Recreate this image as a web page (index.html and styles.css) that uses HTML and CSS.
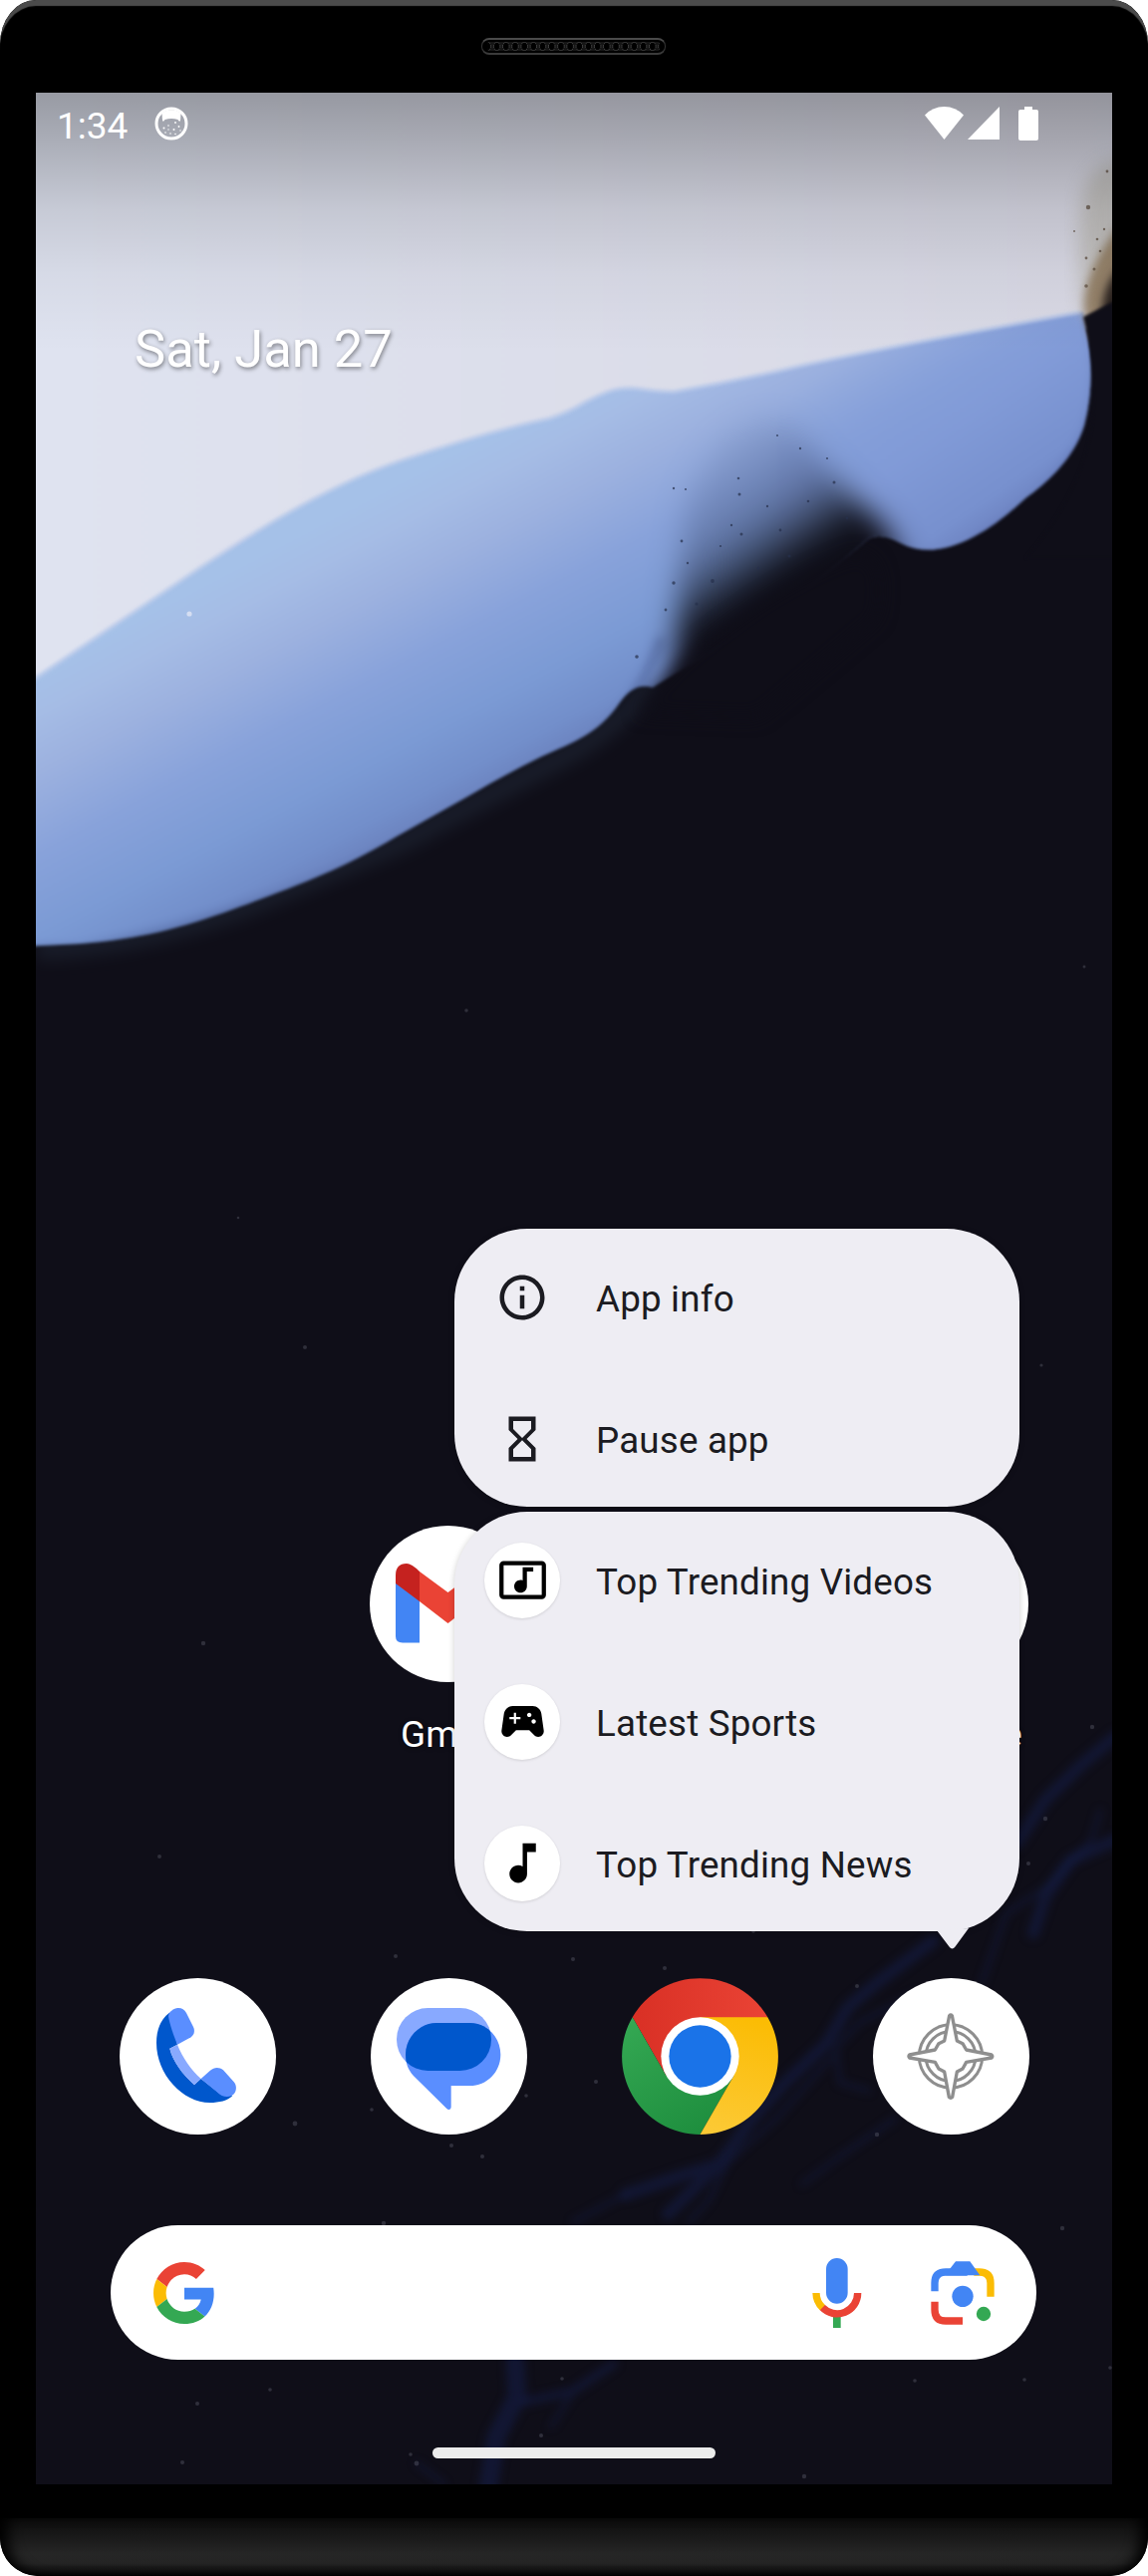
FILE: index.html
```html
<!DOCTYPE html>
<html lang="en">
<head>
<meta charset="utf-8">
<title>Home screen</title>
<link rel="stylesheet" href="styles.css">
</head>
<body>
<div class="phone">
  <div class="bezel-top">
    <div class="speaker"></div>
  </div>

  <main class="screen">
    <svg class="wallpaper" viewBox="36 93 1080 2400" aria-hidden="true">
      <defs>
        <linearGradient id="petal" gradientUnits="userSpaceOnUse" x1="276" y1="546" x2="430" y2="840">
          <stop offset="0" stop-color="#a5c1e8"/>
          <stop offset=".12" stop-color="#a5bce5"/>
          <stop offset=".28" stop-color="#9cb1df"/>
          <stop offset=".5" stop-color="#88a2da"/>
          <stop offset=".72" stop-color="#7b9ad4"/>
          <stop offset=".88" stop-color="#728eca"/>
          <stop offset="1" stop-color="#687db9"/>
        </linearGradient>
        <linearGradient id="tip" gradientUnits="userSpaceOnUse" x1="880" y1="340" x2="1010" y2="530">
          <stop offset="0" stop-color="#86a0da" stop-opacity="0"/>
          <stop offset=".5" stop-color="#819ad7" stop-opacity=".9"/>
          <stop offset=".85" stop-color="#7790ce"/>
          <stop offset="1" stop-color="#6b80be"/>
        </linearGradient>
        <linearGradient id="dust" gradientUnits="userSpaceOnUse" x1="776" y1="612" x2="680" y2="470">
          <stop offset="0" stop-color="#0f0e18"/>
          <stop offset=".16" stop-color="#10111b"/>
          <stop offset=".32" stop-color="#2a3449" stop-opacity=".8"/>
          <stop offset=".5" stop-color="#43527a" stop-opacity=".55"/>
          <stop offset=".75" stop-color="#5a6c98" stop-opacity=".38"/>
          <stop offset="1" stop-color="#6d80ad" stop-opacity=".2"/>
        </linearGradient>
        <linearGradient id="paper" x1="0" y1="0" x2="1" y2="0">
          <stop offset="0" stop-color="#dfe3f0"/>
          <stop offset="1" stop-color="#d8d8e4"/>
        </linearGradient>
        <linearGradient id="scrim" x1="0" y1="0" x2="0" y2="1">
          <stop offset="0" stop-color="#000" stop-opacity=".32"/>
          <stop offset=".2" stop-color="#000" stop-opacity=".23"/>
          <stop offset=".45" stop-color="#000" stop-opacity=".11"/>
          <stop offset=".7" stop-color="#000" stop-opacity=".04"/>
          <stop offset="1" stop-color="#000" stop-opacity="0"/>
        </linearGradient>
        <filter id="b1" color-interpolation-filters="sRGB"><feGaussianBlur stdDeviation="1.5"/></filter>
        <filter id="b4" color-interpolation-filters="sRGB" x="-20%" y="-20%" width="140%" height="140%"><feGaussianBlur stdDeviation="4"/></filter>
        <filter id="b9" color-interpolation-filters="sRGB" x="-30%" y="-30%" width="160%" height="160%"><feGaussianBlur stdDeviation="9"/></filter>
        <filter id="b14" color-interpolation-filters="sRGB" x="-50%" y="-50%" width="200%" height="200%"><feGaussianBlur stdDeviation="14"/></filter>
        <clipPath id="petalClip">
          <path d="M20 691 L36 680 L184 581 C260 530 330 487 400 463 C460 443 500 431 551 420 Q570 414 588 403 C610 392 620 388 640 390 Q660 393 676 393 Q740 382 808 366 Q900 346 1087 313 C1096 350 1098 390 1088 427 C1078 460 1050 485 1029 500 Q1000 527 978 538 C950 553 925 556 904 545 Q885 534 872 540 L800 600 L720 650 L655 690 C640 686 632 692 622 705 C600 737 575 745 544 759 Q505 778 470 799 L397 840 C340 874 300 888 235 912 C180 932 140 942 81 947 L20 950Z"/>
        </clipPath>
      </defs>
      <rect x="36" y="93" width="1080" height="2400" fill="#0f0e18"/>
      <path fill="url(#paper)" filter="url(#b1)" d="M20 70 H1136 V330 H1087 L808 400 L640 440 L300 620 L20 740Z"/>

      <path d="M36 952 Q130 950 240 912 L400 846 L560 762 Q620 732 655 680" fill="none" stroke="#2a3648" stroke-width="18" opacity=".45" filter="url(#b9)"/>
      <g filter="url(#b1)">
        <g clip-path="url(#petalClip)">
          <rect x="20" y="300" width="1090" height="660" fill="url(#petal)"/>
          <rect x="780" y="290" width="330" height="270" fill="url(#tip)"/>
          <path d="M1096 300 C1106 360 1106 400 1092 436 C1072 480 1037 512 982 546" fill="none" stroke="#596cae" stroke-width="10" filter="url(#b4)"/>
          <path d="M20 954 L81 954 Q240 922 399 852 L590 750 Q635 715 664 640" fill="none" stroke="#52679f" stroke-width="9" opacity=".6" filter="url(#b4)"/>
          <path d="M678 690 Q678 560 690 500 Q730 400 800 430 Q835 480 890 530 L930 620 L800 720Z" fill="url(#dust)" filter="url(#b14)"/>
        </g>
      </g>
      <path d="M640 716 Q668 672 722 634 Q792 580 858 556 Q892 556 880 620 L760 720Z" fill="#0f0e18" filter="url(#b9)"/>
      <path d="M20 691 L184 581 C260 530 330 487 400 463 C460 443 500 431 551 420 Q570 414 588 403 C610 392 620 388 640 390 Q660 393 676 393 Q740 382 808 366 Q900 346 1085 313" fill="none" stroke="#bccbea" stroke-width="5" opacity=".5" filter="url(#b1)"/>
      <g fill="#26304b" opacity=".7">
        <circle cx="676" cy="490" r="1.2"/><circle cx="688" cy="491" r="1.1"/><circle cx="742" cy="496" r="1.5"/><circle cx="780" cy="437" r="1.1"/><circle cx="803" cy="450" r="1.2"/><circle cx="837" cy="484" r="1.5"/><circle cx="744" cy="536" r="1.5"/><circle cx="783" cy="532" r="1.4"/><circle cx="676" cy="585" r="1.7"/><circle cx="715" cy="583" r="1.9"/><circle cx="761" cy="570" r="1.5"/><circle cx="684" cy="543" r="1.4"/><circle cx="723" cy="548" r="1.1"/><circle cx="792" cy="558" r="1.6"/><circle cx="770" cy="508" r="1.2"/><circle cx="699" cy="606" r="1.6"/><circle cx="668" cy="612" r="1.4"/><circle cx="639" cy="659" r="1.8"/><circle cx="830" cy="460" r="1.1"/><circle cx="741" cy="480" r="1.3"/><circle cx="811" cy="503" r="1.3"/><circle cx="734" cy="527" r="1.2"/><circle cx="850" cy="520" r="1.4"/><circle cx="690" cy="565" r="1.2"/>
      </g>
      <circle cx="190" cy="616" r="2.6" fill="#d5def2"/>

      <path d="M1086 200 Q1080 250 1086 312 L1130 320 V160 Q1094 160 1086 200Z" fill="#b9b6af" opacity=".7" filter="url(#b9)"/>
      <path d="M1088 312 Q1086 272 1130 216 V340 H1095Z" fill="#8a7355" opacity=".8" filter="url(#b4)"/>
      <path d="M1106 312 Q1108 280 1130 262 V340 H1100Z" fill="#2a221f" filter="url(#b4)"/>
      <path d="M1087 318 L1130 296 V560 H1030 Q1098 480 1098 400 Q1098 360 1087 318Z" fill="#0f0e18" filter="url(#b1)"/>
      <g fill="#5a4a3c" opacity=".7"><circle cx="1092" cy="208" r="2.2"/><circle cx="1111" cy="172" r="1.4"/><circle cx="1090" cy="259" r="1.4"/><circle cx="1101" cy="240" r="1.3"/><circle cx="1104" cy="252" r="1.3"/><circle cx="1090" cy="287" r="1.8"/><circle cx="1098" cy="270" r="1.5"/><circle cx="1108" cy="230" r="1.2"/><circle cx="1078" cy="232" r="1"/></g>

      <g fill="none" stroke="#172356" stroke-linecap="round" stroke-linejoin="round" filter="url(#b4)">
        <g stroke-width="12" opacity=".45">
          <path d="M1120 1742 L1084 1772 L1049 1806 L1020 1850"/>
          <path d="M936 1948 L881 1989 L851 2014 L830 2050 L788 2090 L755 2126 L721 2172 L687 2182 L628 2202"/>
          <path d="M1120 1846 L1074 1867 L1049 1903 L1037 1940"/>
          <path d="M721 2172 L670 2222"/>
          <path d="M517 2369 L519 2405 L498 2445 L490 2495" stroke-width="19"/>
        </g>
        <g stroke-width="4" opacity=".45">
          <path d="M1104 1817 L1095 1847 L1049 1895 L1010 1920 L985 1990"/>
          <path d="M920 2000 L862 2030 L839 2055 L843 2090 L872 2098"/>
          <path d="M835 2064 L780 2125 L730 2170 L712 2207 L691 2230"/>
          <path d="M898 2126 L843 2164 L805 2192"/>
          <path d="M628 2202 L575 2230"/>
          <path d="M527 2410 L574 2400 L616 2372" stroke-width="8"/>
          <path d="M574 2402 L553 2435 M418 2472 L446 2493"/>
        </g>
      </g>
      <g fill="#8b8ea0" opacity=".26">
        <circle cx="306" cy="1352" r="2"/><circle cx="204" cy="1649" r="2.2"/><circle cx="468" cy="1014" r="1.8"/><circle cx="160" cy="1863" r="2"/><circle cx="1096" cy="1733" r="2.2"/><circle cx="1049" cy="1825" r="2.2"/><circle cx="1032" cy="1870" r="2"/><circle cx="575" cy="1966" r="2"/><circle cx="397" cy="1963" r="2"/><circle cx="296" cy="2131" r="2.4"/><circle cx="484" cy="2164" r="2"/><circle cx="528" cy="2103" r="1.8"/><circle cx="373" cy="2117" r="1.8"/><circle cx="598" cy="2089" r="2"/><circle cx="667" cy="1975" r="2"/><circle cx="860" cy="1993" r="2"/><circle cx="880" cy="2142" r="2.2"/><circle cx="385" cy="2231" r="2.2"/><circle cx="1066" cy="2236" r="2.2"/><circle cx="271" cy="2398" r="1.8"/><circle cx="198" cy="2412" r="2"/><circle cx="183" cy="2471" r="2"/><circle cx="418" cy="2472" r="2.4"/><circle cx="412" cy="2463" r="1.8"/><circle cx="543" cy="2444" r="2"/><circle cx="564" cy="2387" r="1.8"/><circle cx="807" cy="2485" r="2.2"/><circle cx="1028" cy="2388" r="1.8"/><circle cx="918" cy="2389" r="1.8"/><circle cx="1114" cy="2376" r="1.8"/><circle cx="453" cy="2153" r="2"/><circle cx="756" cy="1938" r="1.8"/><circle cx="239" cy="1222" r="1.3"/><circle cx="1045" cy="1370" r="1.6"/><circle cx="1088" cy="970" r="1.5"/>
      </g>
      <rect x="36" y="93" width="1080" height="260" fill="url(#scrim)"/>
    </svg>

    <header class="status">
      <span class="clock">1:34</span>
      <svg class="status-cat" viewBox="0 0 34 34">
        <circle cx="17" cy="17" r="15" fill="none" stroke="#fff" stroke-width="3"/>
        <path fill="#fff" d="M7.5 6.5 C13 2 21 2 26.500 6.500 L26 14 Q25 16 23.500 13 Q17 11 10.500 13 Q9 16 8 14Z"/>
        <g fill="#fff"><circle cx="9.500" cy="21.500" r="1"/><circle cx="14" cy="19" r=".8"/><circle cx="21" cy="16" r=".9"/><circle cx="19.500" cy="23" r="1"/><circle cx="24.500" cy="20" r=".9"/><circle cx="11" cy="26" r=".8"/><circle cx="16" cy="27" r=".8"/><circle cx="21" cy="27.500" r=".8"/><circle cx="26" cy="24" r=".7"/><circle cx="14" cy="23" r=".7"/></g>
      </svg>
      <svg class="status-icons" viewBox="0 0 116 36">
        <g fill="#fff">
          <path d="M0 9.500 Q8 1 19.500 1 T39 9.500 L19.500 34Z"/>
          <path d="M75 1 V34 H43Z"/>
          <path d="M100 1 h8 v3 h4 q2 0 2 2 v27 q0 2 -2 2 h-16 q-2 0 -2 -2 v-27 q0 -2 2 -2 h4z"/>
        </g>
      </svg>
    </header>

    <div class="date">Sat, Jan 27</div>

    <section class="apps">
      <div class="app gmail">
        <svg class="app-icon" viewBox="0 0 157 157">
          <circle cx="78.500" cy="78.500" r="78.500" fill="#fff"/>
          <path fill="#4285f4" d="M26 56 L50 74 V117.500 H33 Q26 117.500 26 111Z"/>
          <path fill="#34a853" d="M131 56 L107 74 V117.500 H124 Q131 117.500 131 111Z"/>
          <path fill="#ea4335" d="M50 46 L78.500 67 L107 46 V76 L78.500 98 L50 76Z"/>
          <path fill="#c5221f" d="M26 58 V50 Q26 38 37 38 Q42 38 50 46 V76Z"/>
          <path fill="#fbbc04" d="M131 58 V50 Q131 38 120 38 Q115 38 107 46 V76Z"/>
        </svg>
        <span class="app-label">Gmail</span>
      </div>
      <div class="app youtube">
        <svg class="app-icon" viewBox="0 0 157 157"><circle cx="78.500" cy="78.500" r="78.500" fill="#fff"/></svg>
        <span class="app-label">YouTube</span>
      </div>

      <div class="menu">
        <div class="menu-card">
          <div class="menu-row">
            <span class="menu-icon"><svg width="54" height="54" viewBox="0 0 24 24" fill="#1b1b21"><path d="M11 7h2v2h-2zm0 4h2v6h-2zm1-9C6.480 2 2 6.480 2 12s4.480 10 10 10 10-4.480 10-10S17.520 2 12 2zm0 18c-4.410 0-8-3.590-8-8s3.590-8 8-8 8 3.590 8 8-3.590 8-8 8z"/></svg></span>
            <span class="menu-text">App info</span>
          </div>
          <div class="menu-row">
            <span class="menu-icon"><svg width="54" height="54" viewBox="0 0 24 24" fill="#1b1b21"><path d="M6 2v6h.01L6 8.010 10 12l-4 4 .01.01H6V22h12v-5.990h-.01L18 16l-4-4 4-3.990-.01-.01H18V2H6zm10 14.500V20H8v-3.500l4-4 4 4zm-4-5l-4-4V4h8v3.500l-4 4z"/></svg></span>
            <span class="menu-text">Pause app</span>
          </div>
        </div>
        <div class="menu-card has-arrow">
          <div class="menu-row">
            <span class="menu-icon disc"><svg width="51" height="51" viewBox="0 0 24 24"><path d="M21 3H3c-1.100 0-2 .9-2 2v14c0 1.100.9 2 2 2h18c1.100 0 2-.9 2-2V5c0-1.100-.9-2-2-2zm0 16H3V5h18v14zM8 15c0-1.660 1.340-3 3-3 .35 0 .69.07 1 .18V6h5v2h-3v7.030c-.02 1.640-1.350 2.970-3 2.970-1.660 0-3-1.340-3-3z"/></svg></span>
            <span class="menu-text">Top Trending Videos</span>
          </div>
          <div class="menu-row">
            <span class="menu-icon disc"><svg width="53" height="53" viewBox="0 0 24 24"><path d="M21.580 16.090l-1.090-7.660C20.210 6.460 18.520 5 16.530 5H7.470C5.480 5 3.790 6.460 3.510 8.430l-1.090 7.660C2.200 17.630 3.390 19 4.940 19c.68 0 1.320-.27 1.800-.75L9 16h6l2.250 2.250c.48.48 1.130.75 1.800.75 1.560 0 2.750-1.370 2.530-2.910zM11 11H9v2H8v-2H6v-1h2V8h1v2h2v1zm4-1c-.55 0-1-.45-1-1s.45-1 1-1 1 .45 1 1-.45 1-1 1zm2 3c-.55 0-1-.45-1-1s.45-1 1-1 1 .45 1 1-.45 1-1 1z"/></svg></span>
            <span class="menu-text">Latest Sports</span>
          </div>
          <div class="menu-row">
            <span class="menu-icon disc"><svg width="53" height="53" viewBox="0 0 24 24"><path d="M12 3v10.550c-.59-.34-1.270-.55-2-.55-2.210 0-4 1.790-4 4s1.790 4 4 4 4-1.790 4-4V7h4V3h-6z"/></svg></span>
            <span class="menu-text">Top Trending News</span>
          </div>
          <svg class="arrow" viewBox="0 0 32 22"><path fill="#eeedf3" d="M0 2 L12.500 18.500 Q15.500 22.500 18.500 18.500 L32 0Z"/></svg>
        </div>
      </div>
    </section>

    <nav class="dock">
      <svg class="app-icon" viewBox="0 0 471 471">
        <circle cx="235.500" cy="235.500" r="235.500" fill="#fff"/>
        <path fill="#0057cc" d="M150 104 C122 125 111 158 111 195 C111 290 190 375 272 375 C300 375 325 369 340 354 L302 348 L245 303 L225 321 C190 290 160 250 151 212 L174 200 L158 130Z"/>
        <path fill="#88a9ff" d="M151 212 L174 200 C190 240 215 275 245 303 L225 321 C190 290 160 250 151 212Z"/>
        <path fill="#5a8eff" d="M150 104 C160 93 170 90 177 90 C188 90 195 95 201 105 L222 147 C228 160 224 172 215 178 L174 200 C163 175 155 150 150 130 C147 118 146 112 150 104Z"/>
        <path fill="#5a8eff" d="M245 303 L272 279 C285 267 300 267 312 277 L343 311 C352 320 353 335 347 345 C340 358 322 360 308 354 Q300 349 295 344Z"/>
      </svg>
      <svg class="app-icon" viewBox="0 0 471 471">
        <defs><clipPath id="pill"><rect x="78" y="90" width="285" height="189" rx="94"/></clipPath></defs>
        <circle cx="235.500" cy="235.500" r="235.500" fill="#fff"/>
        <rect x="78" y="90" width="285" height="189" rx="94" fill="#88a9ff"/>
        <path fill="#5a8eff" d="M198 135 H298 C350 135 391 178 391 230 C391 283 350 324 298 324 H242 V388 C242 396 234 398 229 393 L128 293 C112 275 105 255 105 230 C105 178 148 135 198 135Z"/>
        <path clip-path="url(#pill)" fill="#0057cc" d="M198 135 H298 C350 135 391 178 391 230 C391 283 350 324 298 324 H160 L128 293 C112 275 105 255 105 230 C105 178 148 135 198 135Z"/>
      </svg>
      <svg class="app-icon" viewBox="0 0 471 471">
        <defs>
          <linearGradient id="cr" x1="0" x2="1"><stop offset="0" stop-color="#d93025"/><stop offset="1" stop-color="#ea4335"/></linearGradient>
          <linearGradient id="cy" x1=".4" y1="1" x2=".6" y2="0"><stop offset="0" stop-color="#fcc934"/><stop offset="1" stop-color="#fbbc04"/></linearGradient>
          <linearGradient id="cg" x1=".7" y1="1" x2=".1" y2="0"><stop offset="0" stop-color="#1e8e3e"/><stop offset="1" stop-color="#34a853"/></linearGradient>
        </defs>
        <path fill="url(#cr)" d="M32 117.500 A235.500 235.500 0 0 1 439 117.500 L235.500 235.500 L133.500 294Z"/>
        <path fill="url(#cg)" d="M235.500 471 A235.500 235.500 0 0 1 32 117.500 L133.500 294 L235.500 235.500 L337 294Z"/>
        <path fill="url(#cy)" d="M439 117.500 A235.500 235.500 0 0 1 235.500 471 L337 294 L235.500 235.500 V117.500Z"/>
        <circle cx="235.500" cy="235.500" r="117.500" fill="#fff"/>
        <circle cx="235.500" cy="235.500" r="93.500" fill="#1a73e8"/>
      </svg>
      <svg class="app-icon" viewBox="0 0 471 471">
        <circle cx="235.500" cy="235.500" r="235.500" fill="#fff"/>
        <g fill="none" stroke="#8e8e8e" stroke-width="9" stroke-linejoin="round">
          <circle cx="234" cy="235.500" r="95"/>
          <circle cx="234" cy="235.500" r="75"/>
          <path fill="#fff" stroke-width="10" d="M230 113 Q234 108 238 113 L253 189 L270 197 L281 216 L357 231 Q362 235 357 240 L281 253 L270 273 L253 282 L239 358 Q234 363 229 358 L215 282 L198 273 L187 253 L110 240 Q106 235 110 231 L187 216 L198 197 L215 189Z"/>
        </g>
      </svg>
    </nav>

    <div class="search">
      <svg class="g" viewBox="0 0 48 48">
        <path fill="#ea4335" d="M24 9.500c3.540 0 6.710 1.220 9.210 3.600l6.850-6.850C35.900 2.380 30.470 0 24 0 14.620 0 6.510 5.380 2.560 13.220l7.980 6.190C12.430 13.720 17.740 9.500 24 9.500z"/>
        <path fill="#4285f4" d="M46.980 24.550c0-1.570-.15-3.090-.38-4.550H24v9.020h12.940c-.58 2.960-2.260 5.480-4.780 7.180l7.730 6c4.510-4.180 7.090-10.360 7.090-17.650z"/>
        <path fill="#fbbc05" d="M10.530 28.590c-.48-1.450-.76-2.990-.76-4.590s.27-3.140.76-4.590l-7.980-6.190C.92 16.460 0 20.120 0 24c0 3.880.92 7.540 2.560 10.780l7.970-6.190z"/>
        <path fill="#34a853" d="M24 48c6.480 0 11.930-2.130 15.890-5.810l-7.730-6c-2.150 1.450-4.920 2.300-8.160 2.300-6.260 0-11.570-4.220-13.470-9.910l-7.980 6.190C6.510 42.620 14.620 48 24 48z"/>
      </svg>
      <svg class="mic" viewBox="0 0 150 210">
        <path fill="#34a853" d="M63 175h23v35H63z"/>
        <g fill="none" stroke-width="22"><path stroke="#ea4335" d="M137 105 A62 62 0 0 1 30 148"/><path stroke="#fbbc04" d="M12 105 A62 62 0 0 0 31 149"/></g>
        <rect x="42" y="0" width="65" height="137" rx="32.500" fill="#4285f4"/>
      </svg>
      <svg class="lens" viewBox="0 0 192 192">
        <g fill="none" stroke-width="22">
          <path stroke="#fbbc04" d="M130 33 H146 Q180 33 180 66 V107"/>
          <path stroke="#4285f4" d="M12 91 V66 Q12 33 45 33 H110"/>
          <path stroke="#ea4335" d="M12 122 V146 Q12 180 45 180 H96"/>
        </g>
        <path fill="#4285f4" d="M57 24 L75 1 H118 L148 43 H45Z"/>
        <circle cx="96" cy="106" r="32" fill="#4285f4"/>
        <circle cx="159" cy="159" r="21.500" fill="#34a853"/>
      </svg>
    </div>

    <div class="home-bar"></div>
  </main>

  <div class="chin"></div>
</div>
</body>
</html>
```
FILE: styles.css
```css
* { box-sizing: border-box; }

body {
  margin: 0;
  background: #fff;
  font-family: Roboto, "Liberation Sans", sans-serif;
}

svg { display: block; }

.phone {
  display: flex;
  flex-direction: column;
  align-items: center;
  width: 1152px;
  height: 2585px;
  overflow: hidden;
  background: #000;
  border-radius: 36px 36px 38px 38px / 44px 44px 38px 38px;
}

.bezel-top {
  display: flex;
  justify-content: center;
  width: 100%;
  height: 93px;
  padding: 38px 1px 0 0;
  border-radius: 36px 36px 0 0 / 44px 44px 0 0;
  box-shadow: inset 0 7px 1px -1px #4b4b4b;
}

.speaker {
  width: 185px;
  height: 17px;
  border: 1px solid #333;
  border-top: 2px solid #4a4a4a;
  border-bottom: 2px solid #3b3b3b;
  border-radius: 8px;
  padding: 2px 5px;
  background: radial-gradient(ellipse 3.500px 4.500px at center, #000 75%, #444 95%, #161616 100%) 5px center / 9.200px 11px repeat-x content-box #161616;
}

.screen {
  position: relative;
  display: flex;
  flex-direction: column;
  width: 1080px;
  height: 2400px;
  overflow: hidden;
  color: #fff;
}

.wallpaper {
  position: absolute;
  inset: 0;
  width: 1080px;
  height: 2400px;
}

.status {
  position: relative;
  display: flex;
  align-items: center;
  height: 62px;
  padding: 0 72px 0 21px;
}

.clock {
  font-size: 37px;
  line-height: 43px;
  padding-top: 4px;
}

.status-cat { width: 34px; height: 34px; margin-left: 27px; }
.status-icons { width: 116px; height: 36px; margin-left: auto; }

.date {
  position: relative;
  margin: 164px 0 0 99px;
  font-size: 52.500px;
  line-height: 62px;
  text-shadow: 1px 2px 4px rgba(0, 0, 0, .45);
}

.apps {
  position: relative;
  display: grid;
  grid-template-columns: repeat(4, 252px);
  padding-left: 35px;
  margin-top: 1150px;
  height: 454px;
}

.app {
  display: flex;
  flex-direction: column;
  align-items: center;
}

.gmail { grid-column: 2; }
.youtube { grid-column: 4; }

.app-icon { width: 157px; height: 157px; flex: none; }

.app-label {
  margin-top: 31px;
  padding-left: 2px;
  font-size: 36.750px;
  letter-spacing: .2px;
  line-height: 44px;
  text-shadow: 0 1px 4px rgba(0, 0, 0, .6);
}

.menu {
  position: absolute;
  left: 420px;
  top: -298px;
  display: flex;
  flex-direction: column;
  gap: 5px;
  width: 567px;
  color: #1b1b21;
}

.menu-card {
  position: relative;
  display: flex;
  flex-direction: column;
  gap: 5px;
  border-radius: 73px;
  background: #eeedf3;
  box-shadow: 0 1px 6px rgba(0, 0, 0, .2);
}

.menu-row {
  display: flex;
  align-items: center;
  gap: 36px;
  height: 137px;
  padding-left: 30px;
  font-size: 36.750px;
  letter-spacing: .18px;
}

.menu-text { padding-top: 3px; }

.menu-icon {
  display: flex;
  align-items: center;
  justify-content: center;
  width: 76px;
  height: 76px;
  border-radius: 50%;
}

.disc {
  background: #fff;
  box-shadow: 0 1px 3px rgba(0, 0, 0, .12);
}

.arrow {
  position: absolute;
  left: 484px;
  top: 418px;
  width: 32px;
  height: 22px;
}

.dock {
  position: relative;
  display: flex;
  gap: 95px;
  padding-left: 84px;
}

.search {
  position: relative;
  display: flex;
  align-items: center;
  width: 929px;
  height: 135px;
  margin: 91px 0 0 75px;
  padding: 0 42px 0 43px;
  border-radius: 68px;
  background: #fff;
}

.g { width: 62px; height: 62px; }
.mic { width: 50px; height: 70px; margin: 1px 69px 0 auto; }
.lens { width: 64px; height: 64px; }

.home-bar {
  position: relative;
  width: 284px;
  height: 11px;
  margin: 88px auto 0;
  border-radius: 6px;
  background: #ececec;
}

.chin {
  width: 100%;
  height: 58px;
  margin-top: 34px;
  border-radius: 0 0 38px 38px;
  background: linear-gradient(#0c0c0c, #1a1a1a 35%, #262626 62%, #242424 78%, #0a0a0a 97%, #000);
  box-shadow: inset 14px 0 14px -6px #000, inset -14px 0 14px -6px #000;
}
```
